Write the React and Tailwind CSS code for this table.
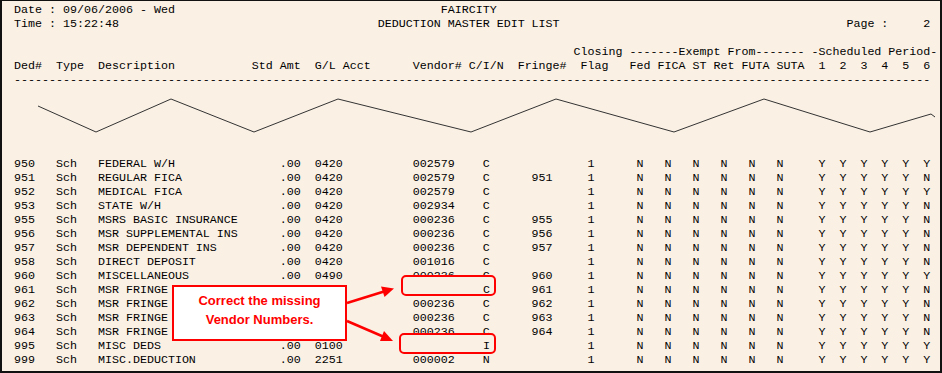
import React from "react";

function line(parts) {
  let s = "";
  for (const [c, t] of parts) {
    if (!t) continue;
    if (s.length < c) s += " ".repeat(c - s.length);
    s += t;
  }
  return s;
}

// rows 961-964 are partly hidden behind the callout in the reference
const rows = [
  ["950", "FEDERAL W/H", ".00", "0420", "002579", "C", "", "NNNNNN", "YYYYYY"],
  ["951", "REGULAR FICA", ".00", "0420", "002579", "C", "951", "NNNNNN", "YYYYYN"],
  ["952", "MEDICAL FICA", ".00", "0420", "002579", "C", "", "NNNNNN", "YYYYYY"],
  ["953", "STATE W/H", ".00", "0420", "002934", "C", "", "NNNNNN", "YYYYYN"],
  ["955", "MSRS BASIC INSURANCE", ".00", "0420", "000236", "C", "955", "NNNNNN", "YYYYYN"],
  ["956", "MSR SUPPLEMENTAL INS", ".00", "0420", "000236", "C", "956", "NNNNNN", "YYYYYN"],
  ["957", "MSR DEPENDENT INS", ".00", "0420", "000236", "C", "957", "NNNNNN", "YYYYYN"],
  ["958", "DIRECT DEPOSIT", ".00", "0420", "001016", "C", "", "NNNNNN", "YYYYYN"],
  ["960", "MISCELLANEOUS", ".00", "0490", "000236", "C", "960", "NNNNNN", "YYYYYY"],
  ["961", "MSR FRINGE", "", "", "", "", "961", "NNNNNN", "YYYYYN"],
  ["962", "MSR FRINGE", "", "", "000236", "C", "962", "NNNNNN", "YYYYYN"],
  ["963", "MSR FRINGE", "", "", "000236", "C", "963", "NNNNNN", "YYYYYN"],
  ["964", "MSR FRINGE", "", "", "000236", "C", "964", "NNNNNN", "YYYYYN"],
  ["995", "MISC DEDS", ".00", "0100", "", "", "", "NNNNNN", "YYYYYY"],
  ["999", "MISC.DEDUCTION", ".00", "2251", "000002", "N", "", "NNNNNN", "YYYYYY"],
];

const nCols = [89, 93, 97, 101, 105, 109];
const yCols = [115, 118, 121, 124, 127, 130];

function dataLine(r) {
  const [ded, desc, amt, gl, vendor, cin, fringe, ex, sch] = r;
  const parts = [
    [0, ded],
    [6, "Sch"],
    [12, desc],
    [38, amt],
    [43, gl],
    [57, vendor],
    [67, cin],
    [74, fringe],
    [82, "1"],
  ];
  nCols.forEach((c, i) => parts.push([c, ex[i]]));
  yCols.forEach((c, i) => parts.push([c, sch[i]]));
  return line(parts);
}

const headerLines = [
  line([[0, "Date : 09/06/2006 - Wed"], [61, "FAIRCITY"]]),
  line([[0, "Time : 15:22:48"], [52, "DEDUCTION MASTER EDIT LIST"], [119, "Page :     2"]]),
  " ",
  line([[80, "Closing -------Exempt From------- -Scheduled Period-"]]),
  line([
    [0, "Ded#"],
    [6, "Type"],
    [12, "Description"],
    [34, "Std Amt"],
    [43, "G/L Acct"],
    [57, "Vendor#"],
    [65, "C/I/N"],
    [72, "Fringe#"],
    [81, "Flag"],
    [88, "Fed FICA ST Ret FUTA SUTA"],
    [115, "1"],
    [118, "2"],
    [121, "3"],
    [124, "4"],
    [127, "5"],
    [130, "6"],
  ]),
  "-".repeat(131),
];

const mono = "font-['Liberation_Mono',monospace] text-[11.667px] leading-[14px] whitespace-pre text-black";

export default function App() {
  return (
    <div className="relative w-[942px] h-[373px] bg-[#faf0e4] overflow-hidden">
      <div className="w-full h-full border-t border-l-2 border-r-2 border-b-2 border-[#111] flex flex-col pt-[2px] pl-[12px]">
        <div className={mono}>
          {headerLines.map((l, i) => (
            <div key={i} className="h-[14px]">{l}</div>
          ))}
        </div>
        <div className="h-[70px] -ml-[12px] shrink-0">
          <svg width="938" height="70" viewBox="2 87 938 70" className="block">
            <polyline
              points="38,106 96,132 171,99 254,132 338,99 471,132 556,99 674,132 764,99 870,132 931,114 935,117"
              fill="none"
              stroke="#333"
              strokeWidth="1"
            />
          </svg>
        </div>
        <div className={mono}>
          {rows.map((r) => (
            <div key={r[0]} className="h-[14px]">{dataLine(r)}</div>
          ))}
        </div>
      </div>

      {/* rounded highlight boxes */}
      <div className="absolute left-[401px] top-[275px] w-[95px] h-[21px] border-2 border-[#ff0000] rounded-[5px] bg-[#faf0e4] pt-[6px] pl-[80px]">
        <div className={mono}>C</div>
      </div>
      <div className="absolute left-[399px] top-[333px] w-[97px] h-[21px] border-2 border-[#ff0000] rounded-[5px] bg-[#faf0e4] pt-[4px] pl-[82px]">
        <div className={mono}>I</div>
      </div>

      {/* arrows */}
      <svg className="absolute left-0 top-0 pointer-events-none" width="942" height="373">
        <line x1="347" y1="303" x2="384" y2="291.5" stroke="#ff0000" strokeWidth="2.5" />
        <polygon points="394,288.5 381,286.5 384.5,297" fill="#ff0000" />
        <line x1="347" y1="321" x2="383" y2="336.5" stroke="#ff0000" strokeWidth="2.5" />
        <polygon points="393,341 384,331 380,341" fill="#ff0000" />
      </svg>

      {/* callout */}
      <div className="absolute left-[172px] top-[285px] w-[175px] h-[56px] border-2 border-[#ff0000] bg-white flex flex-col items-center pt-[4px] font-['Liberation_Sans',sans-serif] font-bold text-[13px] leading-[19px] text-[#ff0000]">
        <div>Correct the missing</div>
        <div>Vendor Numbers.</div>
      </div>
    </div>
  );
}
